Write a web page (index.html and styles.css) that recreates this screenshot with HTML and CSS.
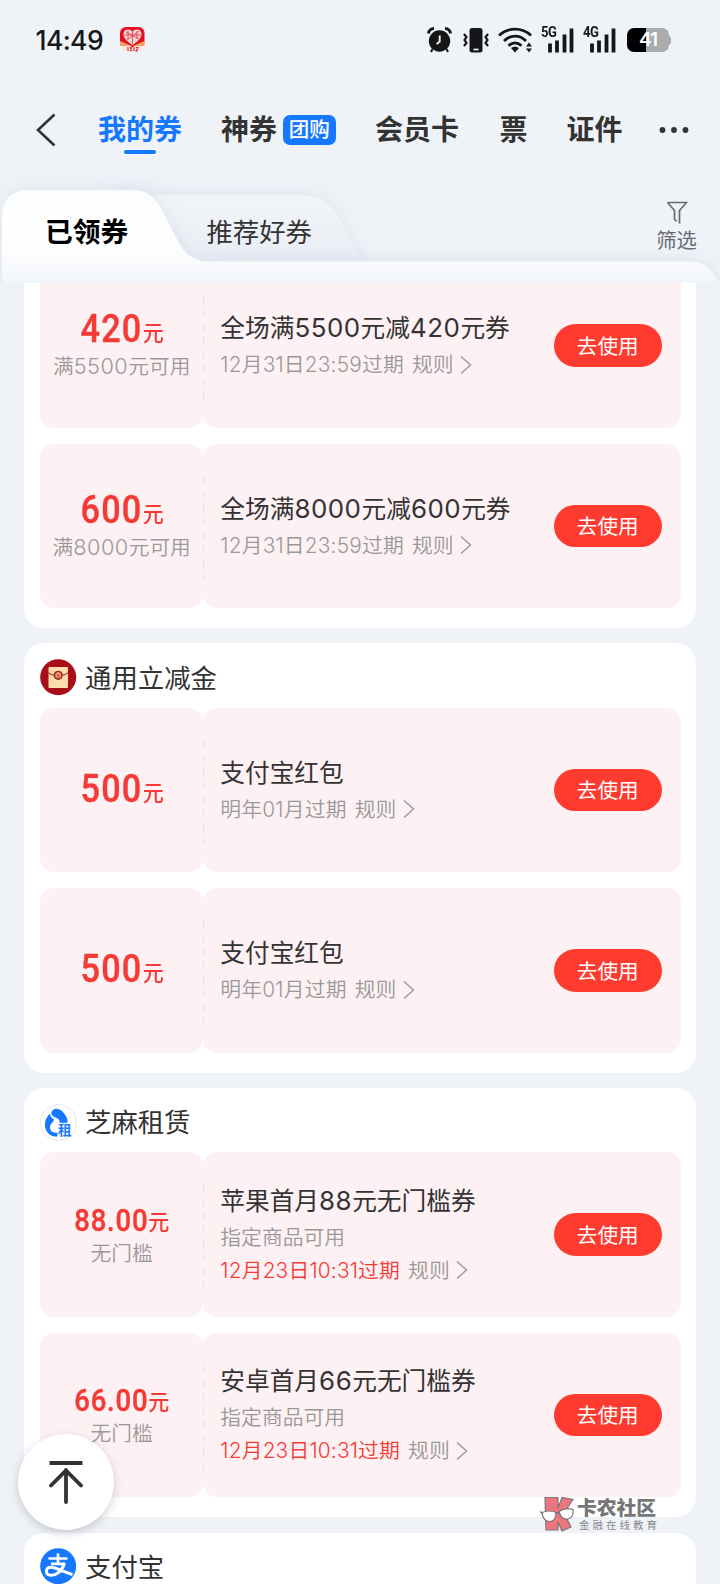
FILE: index.html
```
<!DOCTYPE html>
<html lang="zh-CN">
<head>
<meta charset="utf-8">
<title>我的券</title>
<link rel="stylesheet" href="styles.css">
</head>
<body>
<div class="page">
  <header class="status">
    <span class="clock">14:49</span>
    <svg class="app-badge" width="26" height="26" viewBox="0 0 26 26">
      <rect x="0" y="0" width="24.500" height="20" rx="6" fill="#e60f1e"/>
      <path d="M1 15 L12.500 20 L24 15 L22 23 Q12 27 3 23Z" fill="#fbe6dc"/>
      <path d="M0 14 L12 19 L0 19Z M24.500 14 L13 19 L24.500 19Z" fill="#f5a06a"/>
      <path d="M12.500 18 C6 14 3 10 3.500 6 C4.500 1.500 10 1.500 12.500 4.500 C15 1.500 20.500 1.500 21.500 6 C22 10 19 14 12.500 18Z" fill="#f8d5d3"/>
      <path d="M4 8h17M6 5l13 7M19 4L7 13M12.500 4v13M8 4v8M17 4v8" stroke="#e2323a" stroke-width=".8" fill="none"/>
      <path d="M8 20v4M10 20l2 4M12 20l-2 4M14 20v4M16 20.500h2l-2 3.500h2" stroke="#d92a32" stroke-width="1.100" fill="none"/>
    </svg>
    <div class="status-icons">
      <svg width="26" height="26" viewBox="0 0 26 26">
        <circle cx="12.500" cy="14" r="10.700" fill="#151617"/>
        <path d="M1.500 6.500 A5.500 5.500 0 0 1 7 1.500M18 1.500 A5.500 5.500 0 0 1 23.500 6.500" stroke="#151617" stroke-width="3" fill="none"/>
        <path d="M5.500 22l-1.500 3M19.500 22l1.500 3" stroke="#151617" stroke-width="2"/>
        <path d="M12.700 8.500v6l-3 2.500" stroke="#eff3f8" stroke-width="1.900" fill="none"/>
      </svg>
      <svg width="26" height="26" viewBox="0 0 26 26">
        <rect x="6.500" y="1" width="13" height="24.500" rx="2.500" fill="#151617"/>
        <path d="M10.500 22.500h5" stroke="#eff3f8" stroke-width="1.700"/>
        <path d="M1 7l2.500 3-2 3 2 3-2.500 3M25 7l-2.500 3 2 3-2 3 2.500 3" stroke="#151617" stroke-width="2.200" fill="none"/>
      </svg>
      <svg width="36" height="26" viewBox="0 0 36 26">
        <g fill="none" stroke="#151617" stroke-width="2.800">
          <path d="M1 8.500C10 0 24 0 33 8.500"/><path d="M6 14C12.500 7.500 21.500 7.500 28 14"/><path d="M10.500 18.700C14.500 15 19.500 15 23.500 18.700"/>
        </g>
        <path d="M13 21q4-3 8 0l-4 4.500z" fill="#151617"/>
        <path d="M28 19.500l3-4 3 4zM28 21.500l3 4 3-4z" fill="#151617"/>
      </svg>
      <div class="signal"><span class="net">5G</span>
        <svg width="26" height="26" viewBox="0 0 26 26"><path d="M2 16.500v9M9 13.500v12M16.500 7.500v18M23.500 1.500v24" stroke="#151617" stroke-width="3.800"/></svg>
      </div>
      <div class="signal"><span class="net">4G</span>
        <svg width="26" height="26" viewBox="0 0 26 26"><path d="M2 16.500v9M9 13.500v12M16.500 7.500v18M23.500 1.500v24" stroke="#151617" stroke-width="3.800"/></svg>
      </div>
      <div class="battery"><span>41</span></div>
    </div>
  </header>

  <nav class="nav">
    <svg class="back" width="20" height="34" viewBox="0 0 20 34"><path d="M18.500 1.500L2 17l16.500 15.500" fill="none" stroke="#333" stroke-width="2.600"/></svg>
    <a class="nav-item current">我的券</a>
    <a class="nav-item">神券</a><span class="tag">团购</span>
    <a class="nav-item member">会员卡</a>
    <a class="nav-item">票</a>
    <a class="nav-item last">证件</a>
    <svg class="more" width="32" height="8" viewBox="0 0 32 8"><g fill="#333"><circle cx="4.500" cy="4" r="2.900"/><circle cx="16" cy="4" r="2.900"/><circle cx="27.500" cy="4" r="2.900"/></g></svg>
  </nav>

  <div class="tabs">
    <svg class="tabs-shape" width="720" height="260" viewBox="0 0 720 260">
      <defs>
        <linearGradient id="front" x1="0" y1="20" x2="0" y2="113" gradientUnits="userSpaceOnUse"><stop offset="0" stop-color="#fbfcfe"/><stop offset=".35" stop-color="#fff"/><stop offset=".72" stop-color="#fbfcfd"/><stop offset="1" stop-color="#f1f5f9"/></linearGradient>
        <linearGradient id="rear" x1="0" y1="25" x2="0" y2="92" gradientUnits="userSpaceOnUse"><stop offset="0" stop-color="#f1f4f8"/><stop offset="1" stop-color="#eaeef5"/></linearGradient>
        <filter id="soft" x="-10%" y="-30%" width="120%" height="160%"><feDropShadow dx="0" dy="-2" stdDeviation="9" flood-color="#8f9dc0" flood-opacity=".17"/></filter>
        <clipPath id="clip"><rect width="720" height="113"/></clipPath>
      </defs>
      <g clip-path="url(#clip)">
        <path d="M110 25H300C323 25 333 36 343 55L358 85Q364 96 376 100H110Z" fill="url(#rear)" filter="url(#soft)"/>
        <path d="M2 130V48C2 29 12 20 30 20H132C150 20 158 31 165 46L180 75Q190 91 208 91.500H690Q710 92 719 113V130Z" fill="url(#front)" filter="url(#soft)"/>
      </g>
    </svg>
    <span class="tab active">已领券</span>
    <span class="tab">推荐好券</span>
    <div class="filter">
      <svg width="22" height="24" viewBox="0 0 22 24"><path d="M1.500 1.500H20.500L13.500 9.500V22.500M1.500 1.500L8.500 9.500V18L10.500 20.500" fill="none" stroke="#666b72" stroke-width="1.700"/></svg>
      <span>筛选</span>
    </div>
  </div>

  <main class="list">
    <section class="card clipped">
      <article class="coupon">
        <div class="value"><p class="amount">420<i>元</i></p><p class="cond">满<em>5500</em>元可用</p></div>
        <div class="detail"><div class="info"><h3>全场满<em>5500</em>元减<em>420</em>元券</h3><p><span class="date">12月31日23:59过期</span><span class="rule">规则</span><svg class="chev" viewBox="0 0 12 20"><path d="M1 1.500L10.500 10 1 18.500"/></svg></p></div><button>去使用</button></div>
      </article>
      <article class="coupon">
        <div class="value"><p class="amount">600<i>元</i></p><p class="cond">满<em>8000</em>元可用</p></div>
        <div class="detail"><div class="info"><h3>全场满<em>8000</em>元减<em>600</em>元券</h3><p><span class="date">12月31日23:59过期</span><span class="rule">规则</span><svg class="chev" viewBox="0 0 12 20"><path d="M1 1.500L10.500 10 1 18.500"/></svg></p></div><button>去使用</button></div>
      </article>
    </section>

    <section class="card">
      <h2>
        <svg width="37" height="37" viewBox="0 0 37 37"><circle cx="18.200" cy="18.200" r="18" fill="#a80d18"/><rect x="8.500" y="8" width="19.500" height="21" rx="1" fill="#fcdcae"/><path d="M8.500 13.500Q10.500 16.500 18 16.500Q26 16.500 28 13.500" stroke="#a8362b" stroke-width="1.200" fill="none"/><circle cx="18.200" cy="16.300" r="3.800" fill="#f6b483" stroke="#a3251d" stroke-width="1.700"/><path d="M16.500 14.500l1.700 2 1.700-2M18.200 16.500v2.500M16.500 17h3.400" stroke="#c0392b" stroke-width=".9" fill="none"/></svg>
        <span>通用立减金</span>
      </h2>
      <article class="coupon">
        <div class="value"><p class="amount">500<i>元</i></p></div>
        <div class="detail"><div class="info"><h3>支付宝红包</h3><p><span class="date">明年01月过期</span><span class="rule">规则</span><svg class="chev" viewBox="0 0 12 20"><path d="M1 1.500L10.500 10 1 18.500"/></svg></p></div><button>去使用</button></div>
      </article>
      <article class="coupon">
        <div class="value"><p class="amount">500<i>元</i></p></div>
        <div class="detail"><div class="info"><h3>支付宝红包</h3><p><span class="date">明年01月过期</span><span class="rule">规则</span><svg class="chev" viewBox="0 0 12 20"><path d="M1 1.500L10.500 10 1 18.500"/></svg></p></div><button>去使用</button></div>
      </article>
    </section>

    <section class="card">
      <h2>
        <svg width="37" height="37" viewBox="0 0 37 37"><circle cx="18.500" cy="18.500" r="18" fill="#fff" stroke="#dcdfe5" stroke-width=".8"/><path d="M11.500 8.500C12.500 3.500 19 3.500 23 8C26.500 12 28 15.500 27.500 18.800H19.500C20 16 18.500 14.800 15.500 13.500C12 12 11 10.500 11.500 8.500Z" fill="#1677ff"/><path d="M10 9.500C5.500 14 3.500 20 6 26C8.500 31 13 33 17.500 32.500V28.500C13.500 29.500 9.500 27 10 23C10.500 19 13.500 18.500 14 15.500C12 14.500 10 12.500 10 9.500Z" fill="#1677ff"/><text class="logo-rent" x="18" y="31.300">租</text></svg>
        <span>芝麻租赁</span>
      </h2>
      <article class="coupon">
        <div class="value"><p class="amount small">88.00<i>元</i></p><p class="cond">无门槛</p></div>
        <div class="detail"><div class="info"><h3>苹果首月<em>88</em>元无门槛券</h3><p>指定商品可用</p><p><span class="date urgent">12月23日10:31过期</span><span class="rule">规则</span><svg class="chev" viewBox="0 0 12 20"><path d="M1 1.500L10.500 10 1 18.500"/></svg></p></div><button>去使用</button></div>
      </article>
      <article class="coupon">
        <div class="value"><p class="amount small">66.00<i>元</i></p><p class="cond">无门槛</p></div>
        <div class="detail"><div class="info"><h3>安卓首月<em>66</em>元无门槛券</h3><p>指定商品可用</p><p><span class="date urgent">12月23日10:31过期</span><span class="rule">规则</span><svg class="chev" viewBox="0 0 12 20"><path d="M1 1.500L10.500 10 1 18.500"/></svg></p></div><button>去使用</button></div>
      </article>
    </section>

    <section class="card">
      <h2>
        <svg width="37" height="37" viewBox="0 0 37 37"><circle cx="18.200" cy="18.200" r="18" fill="#1677ff"/><g fill="none" stroke="#fff"><path d="M8.500 10.500H27.500M18 5.500V15.500M11 15.800H25" stroke-width="2.700"/><path d="M24.500 15C22 23.500 16 27.500 11 27.300C5 27 5 20 10.500 19.300C16 19 21 23.500 32.500 26.500" stroke-width="3"/></g></svg>
        <span>支付宝</span>
      </h2>
    </section>
  </main>

  <button class="to-top" aria-label="回到顶部">
    <svg width="34" height="44" viewBox="0 0 34 44"><path d="M.5 3H33.500" stroke="#333" stroke-width="3.800"/><path d="M17 42V10M2 25.500L17 10.500 32 25.500" fill="none" stroke="#333" stroke-width="3.800" stroke-linecap="round"/></svg>
  </button>

  <div class="watermark">
    <svg width="34" height="36" viewBox="0 0 34 36">
      <path d="M5 1.500H18V12L22 1.500 33 3.500 24 17 31 31 22 35 18 26V34H6Z" fill="#ed7580" stroke="#777" stroke-width="1.200"/>
      <path d="M2 16.500Q9 13.500 16 16.500Q16 25 10 25.500Q3 25.500 2 16.500ZM19 15.500Q26 11 33 13.500Q34 21 28 23Q21 24 19 15.500Z" fill="#fff" stroke="#777" stroke-width="1.200"/>
      <path d="M0 15.500l3 2M16 17.500l4-1.500" stroke="#777" stroke-width="1.500"/>
    </svg>
    <div><b>卡农社区</b><span>金融在线教育</span></div>
  </div>
</div>
</body>
</html>
```

FILE: styles.css
```
* { box-sizing: border-box; margin: 0; padding: 0; }

body {
  width: 720px;
  font-family: Inter, "Noto Sans CJK SC", sans-serif;
  background: #eff3f8;
  color: #333;
}

.page {
  position: relative;
  width: 720px;
  height: 1584px;
  overflow: hidden;
  display: flex;
  flex-direction: column;
  background: #eff3f8;
}

svg { display: block; flex: none; }
i, em { font-style: normal; }
button { border: 0; font-family: inherit; }

/* Status bar */
.status {
  height: 80px;
  flex: none;
  display: flex;
  align-items: center;
  padding: 0 51px 0 35.500px;
}
.clock { width: 84px; font-size: 26.500px; font-weight: 500; letter-spacing: -.6px; color: #151617; white-space: nowrap; }
.status-icons { margin-left: auto; display: flex; align-items: center; }
.status-icons > svg:nth-child(1) { margin-right: 10px; }
.status-icons > svg:nth-child(2) { margin-right: 9.500px; }
.status-icons > svg:nth-child(3) { margin-right: 6px; }
.signal { position: relative; width: 34px; margin-right: 8px; display: flex; justify-content: flex-end; }
.net {
  position: absolute;
  left: 1px;
  top: -1px;
  font: 700 14.500px/14px Roboto, sans-serif;
  letter-spacing: -.5px;
  color: #151617;
  transform: scaleX(.9);
  transform-origin: 0 0;
}
.battery {
  position: relative;
  width: 42px;
  height: 24px;
  margin-left: 3px;
  border-radius: 7px;
  background: linear-gradient(90deg, #000 0 19px, #a9abae 19px);
  color: #fff;
  font-size: 19px;
  font-weight: 600;
  line-height: 24px;
  text-align: center;
  letter-spacing: -1px;
}
.battery::after {
  content: "";
  position: absolute;
  right: -2px;
  top: 8px;
  width: 3px;
  height: 9px;
  border-radius: 0 3px 3px 0;
  background: #a9abae;
}

/* Top navigation */
.nav { height: 90px; flex: none; display: flex; align-items: center; padding: 10px 30px 0 36px; }
.back { margin-right: 42px; }
.nav-item { position: relative; margin-right: 39px; font-size: 28px; line-height: 40px; font-weight: 700; white-space: nowrap; }
.nav-item:nth-of-type(2) { margin-right: 5.500px; }
.member { margin-right: 40.500px; }
.current { color: #1677ff; }
.current::after {
  content: "";
  position: absolute;
  left: 26px;
  bottom: -4px;
  width: 32px;
  height: 4px;
  border-radius: 2px;
  background: #1677ff;
}
.tag {
  width: 53.500px;
  height: 30.500px;
  margin-right: 39px;
  border-radius: 7px;
  background: #1677ff;
  color: #fff;
  font-size: 20.500px;
  font-weight: 500;
  line-height: 29.500px;
  text-align: center;
}
.nav-item.last { margin-right: 35px; }

/* Coupon tabs */
.tabs { position: relative; height: 113px; flex: none; display: flex; padding: 42px 23px 0 45px; }
.tabs-shape { position: absolute; left: 0; top: 0; }
.tab { position: relative; font-size: 26.400px; line-height: 40px; color: #333; }
.tab.active { margin-right: 78px; font-size: 27.800px; font-weight: 700; color: #000; }
.filter { position: relative; margin-left: auto; margin-top: -11px; display: flex; flex-direction: column; align-items: center; color: #666b72; font-size: 20.400px; line-height: 31px; }

/* Coupon list */
.list { flex: 1; min-height: 0; overflow: hidden; padding: 0 24px; }
.card { height: 429.400px; margin-bottom: 15.200px; padding: 0 15px 0 16px; border-radius: 20px; background: #fff; }
.card.clipped { margin-top: -84.200px; padding-top: 64.500px; }
.card h2 { display: flex; align-items: center; gap: 8px; height: 64.500px; padding-top: 4px; font-size: 26.400px; font-weight: 400; }
.card h2 span { padding-bottom: 3px; }
.coupon { position: relative; display: flex; height: 164.400px; margin-bottom: 16.200px; }
.coupon::after {
  content: "";
  position: absolute;
  left: 162.500px;
  top: 33px;
  width: 1.500px;
  height: 104px;
  background: repeating-linear-gradient(#ecdde0 0 7px, transparent 7px 13.800px);
}
.value, .detail { border-radius: 14px; background: #fef1f3; }
.value { width: 163.300px; display: flex; flex-direction: column; align-items: center; justify-content: center; white-space: nowrap; }
.amount { height: 41px; font: 500 38px/39px Roboto, "Noto Sans CJK SC", sans-serif; letter-spacing: 1.300px; color: #f53a36; -webkit-text-stroke: .4px #f53a36; transform: scaleX(.9); }
.amount i { display: inline-block; margin-left: 1px; font-size: 21.600px; line-height: 20px; font-weight: 500; letter-spacing: 0; -webkit-text-stroke: 0; transform: scaleX(1.080) translateY(-1px); }
.amount.small { height: 38px; font-size: 30.500px; line-height: 37px; letter-spacing: .9px; }
.cond { margin-top: 1px; font-size: 20.700px; line-height: 28px; font-weight: 350; color: #999; }
.small + .cond { margin-top: 0; }
.cond em, .info h3 em { font-size: 1.050em; letter-spacing: .5px; }
.detail { flex: 1; display: flex; align-items: center; justify-content: space-between; padding: 0 19.500px 0 17px; }
.info { white-space: nowrap; }
.info h3 { height: 40px; font-size: 24.700px; line-height: 38px; font-weight: 400; }
.info p { display: flex; align-items: center; font-size: 20.800px; line-height: 32.800px; font-weight: 350; color: #999; }
.date { letter-spacing: .2px; }
.rule { margin-left: 8px; }
.chev { width: 12px; height: 20px; margin-left: 6.500px; margin-bottom: 2px; fill: none; stroke: #999; stroke-width: 1.400; }
.info .urgent { color: #f53a36; }
.detail button { width: 107.500px; height: 42.500px; padding-bottom: 2px; border-radius: 22px; background: #ff3b30; color: #fff; font-size: 20.600px; }
.logo-rent { font: 700 13.500px "Noto Sans CJK SC", sans-serif; fill: #1677ff; }

/* Floating controls */
.to-top {
  position: absolute;
  left: 18px;
  top: 1434px;
  width: 96px;
  height: 96px;
  display: flex;
  align-items: center;
  justify-content: center;
  border-radius: 50%;
  background: #fff;
  box-shadow: 0 3px 10px rgba(0, 0, 0, .18);
}
.watermark { position: absolute; left: 540px; top: 1496px; display: flex; gap: 3px; white-space: nowrap; color: #777; }
.watermark b { display: block; font-size: 19.800px; line-height: 24px; font-weight: 900; }
.watermark span { display: block; padding-left: 2px; font-size: 10.500px; line-height: 11px; letter-spacing: 3px; color: #888; }
```
